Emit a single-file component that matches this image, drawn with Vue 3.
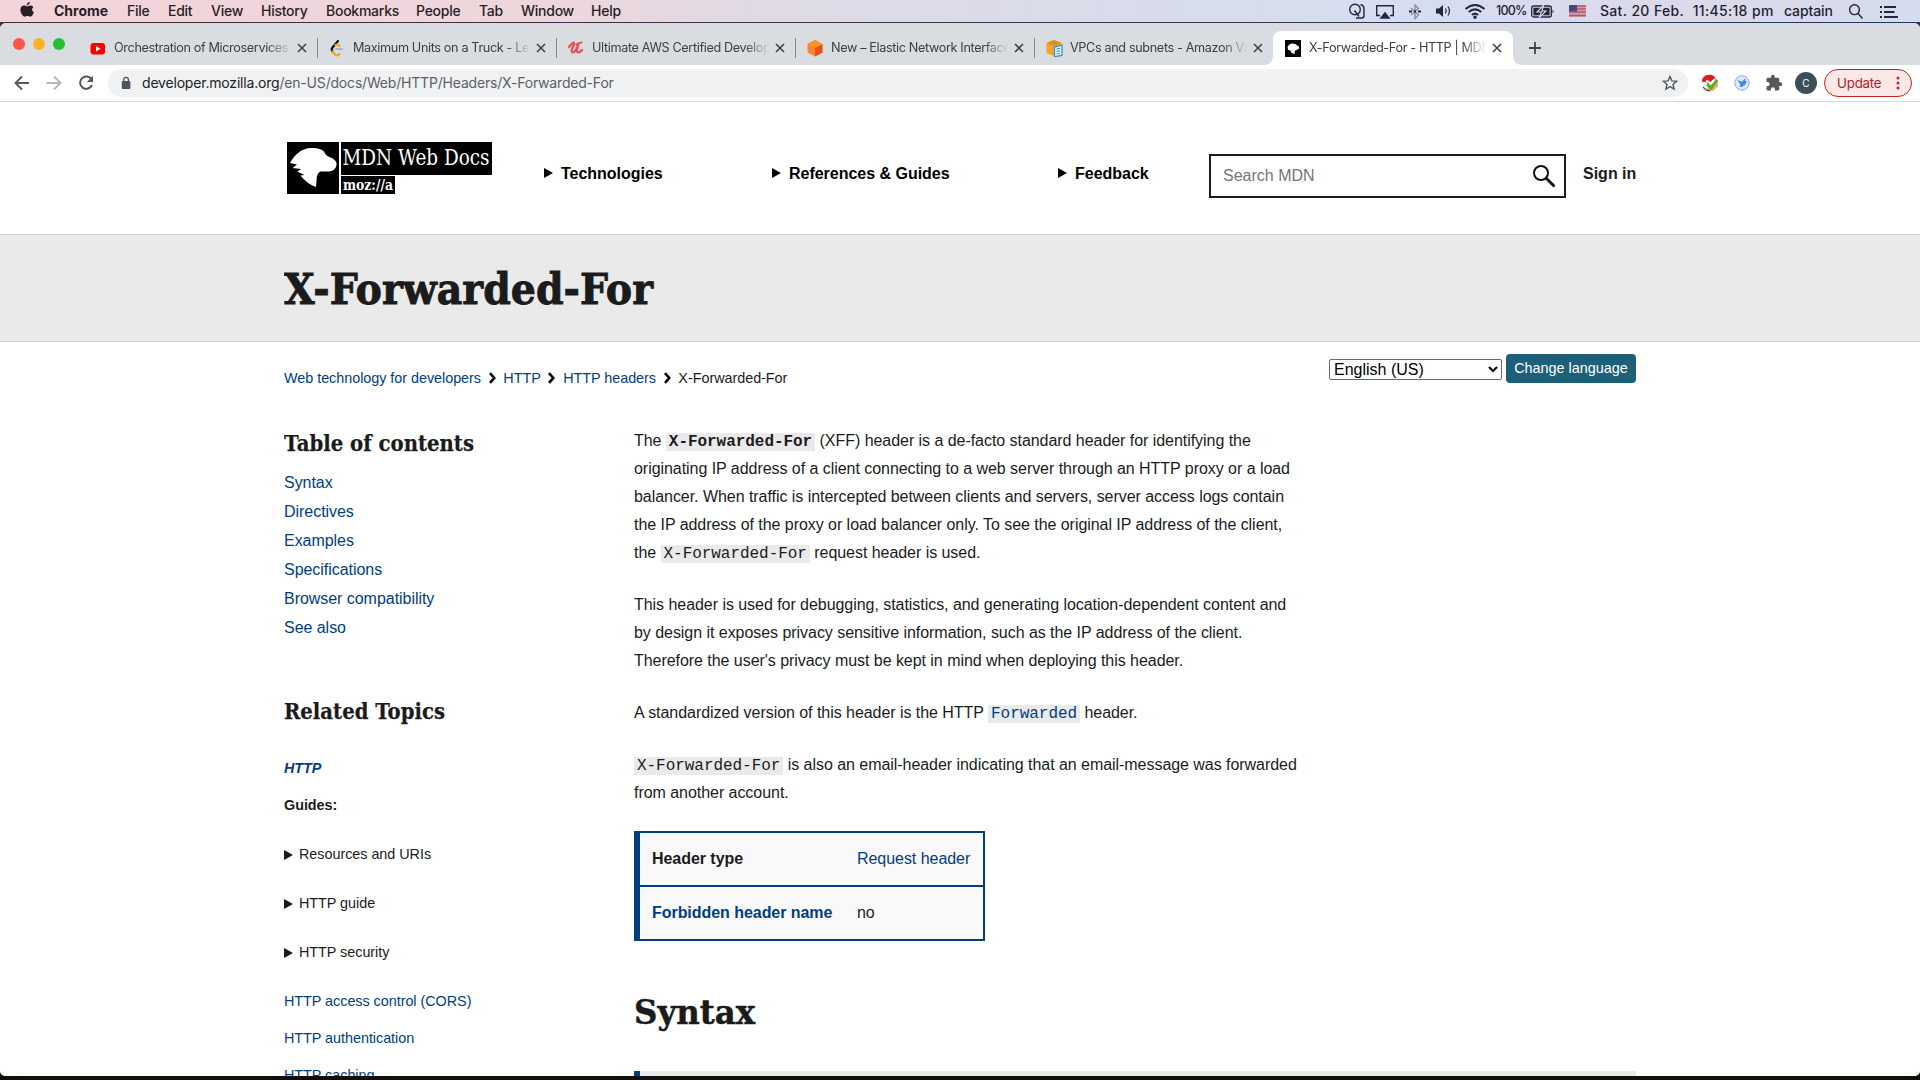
<script setup>
const menus = [
  { label: 'File', w: 41 },
  { label: 'Edit', w: 43 },
  { label: 'View', w: 50 },
  { label: 'History', w: 65 },
  { label: 'Bookmarks', w: 90 },
  { label: 'People', w: 63 },
  { label: 'Tab', w: 42 },
  { label: 'Window', w: 70 },
  { label: 'Help', w: 40 },
]
const tabs = [
  { title: 'Orchestration of Microservices', icon: 'youtube' },
  { title: 'Maximum Units on a Truck - Le', icon: 'leet' },
  { title: 'Ultimate AWS Certified Develop', icon: 'udemy' },
  { title: 'New – Elastic Network Interface', icon: 'aws' },
  { title: 'VPCs and subnets - Amazon VP', icon: 'docs' },
  { title: 'X-Forwarded-For - HTTP | MDN', icon: 'mdn', active: true },
]
const crumbs = ['Web technology for developers', 'HTTP', 'HTTP headers']
const toc = ['Syntax', 'Directives', 'Examples', 'Specifications', 'Browser compatibility', 'See also']
const groups = ['Resources and URIs', 'HTTP guide', 'HTTP security']
const links = ['HTTP access control (CORS)', 'HTTP authentication', 'HTTP caching']
</script>

<template>
  <div class="screen">
    <div class="menubar">
      <svg class="apple" width="16" height="18" viewBox="0 0 16 18"><path fill="#2b1d24" d="M10.9 1c.1 1.700-1.500 3.500-3.200 3.400C7.500 2.800 9.200 1.100 10.900 1zM14.400 6.200c-1.800 1.100-1.700 4 .5 5-.7 2-2.100 4.500-3.600 4.500-1.100 0-1.500-.7-2.800-.7s-1.800.7-2.800.7C4 15.700 1.400 12 1.400 8.800 1.400 6 3.200 4.500 5 4.500c1.300 0 2.200.8 3.200.8.900 0 1.900-.9 3.500-.9 1.100 0 2.100.6 2.700 1.800z" /></svg>
      <span class="app-name">Chrome</span>
      <span v-for="m in menus" :key="m.label" class="menu" :style="{ width: m.w + 'px' }">{{ m.label }}</span>
      <div class="status">
        <svg width="18" height="18" viewBox="0 0 18 18" fill="none" stroke="#26263a" stroke-width="1.400"><circle cx="7" cy="7.500" r="5.300" /><path d="M6.500 8.500l4.500 6M12.500 2.500q3.500 1 3.500 4v7q0 2.500-2.500 2.500H8" /></svg>
        <svg class="airplay" width="20" height="18" viewBox="0 0 20 18"><path d="M5 13.500H1.700V3.700h16.600v9.800H15" fill="none" stroke="#26263a" stroke-width="1.400" /><path d="M10 9.800l5.500 6.900h-11z" fill="#26263a" /></svg>
        <svg class="bt" width="12" height="18" viewBox="0 0 12 18" fill="none" stroke="#85849a" stroke-width="1.200"><path d="M2 6.300l7.500 6.500L6 16.500V3l3.500 3.500L2 13" /><path d="M0 9.500h3M5 9.500h2M9 9.500h3" stroke="#26263a" stroke-width="2" /></svg>
        <svg class="vol" width="18" height="18" viewBox="0 0 18 18"><path d="M1 6.500h3L8 3v12l-4-3.500H1z" fill="#26263a" /><path d="M10.500 6.500q1.500 2.500 0 5M13 4.500q2.900 4.500 0 9" fill="none" stroke="#26263a" stroke-width="1.200" /></svg>
        <svg class="wifi" width="22" height="18" viewBox="0 0 22 18" fill="none" stroke="#26263a" stroke-width="2"><path d="M1.500 7q9.500-8 19 0M4.700 10q6.300-5.300 12.600 0M7.900 13q3.100-2.700 6.200 0" /><circle cx="11" cy="15.300" r=".8" fill="#26263a" /></svg>
        <span class="pct">100%</span>
        <svg class="batt" width="24" height="18" viewBox="0 0 24 18"><rect x=".7" y="4" width="19.600" height="11" rx="2" fill="none" stroke="#26263a" stroke-width="1.300" /><rect x="2.400" y="5.700" width="16.200" height="7.600" fill="#26263a" /><path d="M21.500 7.500q2 2 0 4z" fill="#26263a" /><path d="M12.500 3.500L6 10h4.500L8 15.800 15 9h-4z" fill="#26263a" stroke="#dcdbea" stroke-width="1.100" /></svg>
        <svg class="flag" width="17" height="12" viewBox="0 0 17 12"><rect width="17" height="12" fill="#c9a0ae" /><path d="M0 1h17M0 4h17M0 7h17M0 10.500h17" stroke="#b95468" stroke-width="1.500" /><rect width="8" height="6.500" fill="#48487e" /></svg>
        <span class="clock">Sat. 20 Feb.&nbsp; 11:45:18 pm</span>
        <span class="user">captain</span>
        <svg class="spot" width="16" height="18" viewBox="0 0 16 18" fill="none" stroke="#26263a" stroke-width="1.400"><circle cx="6.500" cy="7.700" r="4.900" /><path d="M10 11.500l4.500 5" /></svg>
        <svg class="list" width="20" height="18" viewBox="0 0 20 18" stroke="#26263a" stroke-width="2"><path d="M1 5h2M1 10h2M1 15h2M5 5h12M5 10h10.500M5 15h14" /></svg>
      </div>
    </div>

    <div class="window">
      <div class="tabstrip">
        <div class="lights"><i class="red" /><i class="yellow" /><i class="green" /></div>
        <div v-for="t in tabs" :key="t.icon" class="tab" :class="[{ active: t.active }, t.icon]">
          <svg class="fav" width="18" height="18" viewBox="0 0 18 18">
            <template v-if="t.icon === 'youtube'"><rect x="1.500" y="4" width="14.500" height="11.500" rx="3" fill="#f00" /><path d="M7 7v5.500l4.500-2.700z" fill="#fff" /></template>
            <template v-else-if="t.icon === 'leet'"><path d="M10 2L4.500 8.500q-1.500 2 0 4" fill="none" stroke="#111" stroke-width="2.200" stroke-linecap="round" /><path d="M7.500 6q2-1 4 1M4.500 12.500l2.500 3q2 2 4.500-.5" fill="none" stroke="#f6a21d" stroke-width="2.200" stroke-linecap="round" /><path d="M8 10h6" stroke="#b5b5b5" stroke-width="2" stroke-linecap="round" /></template>
            <template v-else-if="t.icon === 'udemy'"><path d="M2 8q3-4 4.500-4.500Q8 4 5.500 8.500q-2 5 .5 5 2.500-.5 5.500-8-3 7.500-.3 8 2 0 3.800-2.500M9.500 5.500q3-2 5-2" fill="none" stroke="#ea5252" stroke-width="2.200" stroke-linecap="round" /></template>
            <template v-else-if="t.icon === 'aws'"><path d="M9 1l7.500 4v8.500L9 17.500 1.500 13.500V5z" fill="#f58536" /><path d="M9 9l7.500-4v8.500L9 17.500z" fill="#e8501c" /><path d="M9 1l7.500 4L9 9 1.500 5z" fill="#fd9428" /></template>
            <template v-else-if="t.icon === 'docs'"><path d="M9 1l7.500 3v9.500L9 17 1.500 14V4z" fill="#f0a52b" /><path d="M9 1l7.500 3L9 6.500 1.500 4z" fill="#d6921f" /><path d="M9.500 8L17 6v10.500l-7.500 1.200z" fill="#eaf5fc" stroke="#3d91c8" stroke-width="1.300" /><path d="M11.500 10l3.500-.7M11.500 12.500l3.500-.6M11.500 15l3.500-.5" stroke="#3d91c8" stroke-width="1.200" /></template>
            <template v-else><rect x="1" y="1" width="16" height="17" /><path d="M3.500 8q1.500-3.500 5-3.500 3.500 0 4 1.500l2.500 1.500q.5 3-2.500 3.500l-1.500.5-.5 3.500q-3.500-.5-4-3.500-1.500 0-2.500-1z" fill="#fff" /></template>
          </svg>
          <span class="tab-title">{{ t.title }}</span>
          <svg class="close" width="10" height="10" viewBox="0 0 10 10"><path d="M1 1l8 8M9 1L1 9" stroke="#3f4246" stroke-width="1.600" /></svg>
        </div>
        <svg class="plus" width="14" height="14" viewBox="0 0 14 14"><path d="M7 1v12M1 7h12" stroke="#3f4246" stroke-width="1.800" /></svg>
      </div>

      <div class="toolbar">
        <svg class="nav-ico" width="18" height="18" viewBox="0 0 18 18" fill="none" stroke="#55585c" stroke-width="1.900"><path d="M16 9H3M9 2.500L2.500 9 9 15.500" /></svg>
        <svg class="nav-ico fwd" width="18" height="18" viewBox="0 0 18 18" fill="none" stroke="#b4b6b9" stroke-width="1.900"><path d="M1.500 9H15M9 2.500L15.500 9 9 15.500" /></svg>
        <svg class="nav-ico rel" width="18" height="18" viewBox="0 0 18 18"><path d="M14.300 5A6.200 6.200 0 1 0 15 11" fill="none" stroke="#55585c" stroke-width="2" /><path d="M16 1.800V8H9.800z" fill="#55585c" /></svg>
        <div class="omnibox">
          <svg width="10" height="14" viewBox="0 0 10 14"><rect x=".8" y="5" width="8.600" height="8" rx="1" fill="#505357" /><path d="M2.800 5.500V3.600q0-2.300 2.300-2.300t2.300 2.300v1.900" fill="none" stroke="#505357" stroke-width="1.300" /></svg>
          <span class="url"><b>developer.mozilla.org</b>/en-US/docs/Web/HTTP/Headers/X-Forwarded-For</span>
          <svg class="star" width="18" height="18" viewBox="0 0 18 18"><path d="M9 2.500l1.900 4.400 4.700.4-3.600 3.100 1.100 4.700L9 12.600l-4.100 2.500L6 10.400 2.400 7.300l4.700-.4z" fill="none" stroke="#55585c" stroke-width="1.400" /></svg>
        </div>
        <svg class="ext" width="20" height="20" viewBox="0 0 20 20"><circle cx="11.500" cy="11" r="6" fill="#e9dfb4" /><path d="M2 9Q2 2 9 1.800q6-.3 7 5.200-5 0-7 4-3-3-7-2z" fill="#d81f28" /><circle cx="3.200" cy="11" r="1.600" fill="#fff" /><path d="M6 8q3 0 4 3l5-5" fill="none" stroke="#fff" stroke-width="1.800" /><path d="M10 14L17.500 6l.5 7-5 5q-5 0-7-3z" fill="#e3b052" /><path d="M7.500 11l3.500 4 6-8" fill="none" stroke="#46ad3f" stroke-width="2.800" /><path d="M3 14l3 3 4 1" stroke="#6b4a42" stroke-width="1.300" fill="none" /></svg>
        <svg class="ext e2" width="20" height="20" viewBox="0 0 20 20"><circle cx="10" cy="10" r="7.200" fill="#dcecff" stroke="#8fa6fb" stroke-width="1" /><path d="M5.500 7l4.500 1.800L13.500 5l-.5 3h2l-2 4-3.500 2H7.500l1-2z" fill="#4b82f0" /></svg>
        <svg class="ext e3" width="18" height="18" viewBox="0 0 24 24"><path fill="#55585c" d="M20.500 11H19V7c0-1.100-.9-2-2-2h-4V3.500a2.500 2.500 0 0 0-5 0V5H4c-1.100 0-2 .9-2 2v3.800h1.500a2.700 2.700 0 0 1 0 5.400H2V20c0 1.100.9 2 2 2h3.800v-1.500a2.700 2.700 0 0 1 5.400 0V22H17c1.100 0 2-.9 2-2v-4h1.500a2.500 2.500 0 0 0 0-5z" /></svg>
        <span class="avatar">C</span>
        <div class="update"><span>Update</span><svg width="4" height="14" viewBox="0 0 4 14" fill="#c5221f"><circle cx="2" cy="2" r="1.500" /><circle cx="2" cy="7" r="1.500" /><circle cx="2" cy="12" r="1.500" /></svg></div>
      </div>

      <div class="page">
        <header>
          <svg class="logo" width="206" height="52" viewBox="0 0 206 52">
            <rect width="52" height="52" /><rect x="54" width="151" height="33" /><rect x="54" y="34" width="54" height="18" />
            <path fill="#fff" d="M3 21Q11 6.500 24 6q9-.5 13 3.500 2 4.500 5.500 5.500 4 1 6.500 4.500 1.500 3 0 5.500-2 4-7 4.500l-8.500 0q-3 1-3.700 6L29 45q-9-3-15.500-11.500l4-.5-7-3.500 3.500-2.500-8.500-1 4.500-3.500z" />
            <text x="55.500" y="23" textLength="147" lengthAdjust="spacingAndGlyphs" class="logo-a">MDN Web Docs</text>
            <text x="56" y="48" textLength="50" lengthAdjust="spacingAndGlyphs" class="logo-b">moz://a</text>
          </svg>
          <nav>
            <span class="n1"><i class="tri" />Technologies</span>
            <span class="n2"><i class="tri" />References &amp; Guides</span>
            <span class="n3"><i class="tri" />Feedback</span>
          </nav>
          <div class="search">
            <span>Search MDN</span>
            <svg width="24" height="24" viewBox="0 0 24 24" fill="none" stroke="#111"><circle cx="9" cy="9" r="7" stroke-width="2" /><path d="M14 14l8.500 8.500" stroke-width="2.800" /></svg>
          </div>
          <span class="signin">Sign in</span>
        </header>

        <div class="band">
          <svg width="380" height="60" viewBox="0 0 380 60"><text x="0" y="45" textLength="369" lengthAdjust="spacingAndGlyphs" class="slab h1">X-Forwarded-For</text></svg>
        </div>

        <div class="crumbrow">
          <div class="crumbs">
            <template v-for="c in crumbs" :key="c">
              <a>{{ c }}</a>
              <svg width="7" height="12" viewBox="0 0 7 12"><path d="M1 1.200L5.300 6 1 10.800" fill="none" stroke="#000" stroke-width="2.600" /></svg>
            </template>
            <span>X-Forwarded-For</span>
          </div>
          <div class="lang">
            <div class="select"><span>English (US)</span><svg width="10" height="7" viewBox="0 0 10 7"><path d="M1 1l4 4 4-4" fill="none" stroke="#000" stroke-width="2" /></svg></div>
            <div class="change">Change language</div>
          </div>
        </div>

        <div class="columns">
          <aside>
            <svg class="side-h" width="200" height="30" viewBox="0 0 200 30"><text x="0" y="22" textLength="190" lengthAdjust="spacingAndGlyphs" class="slab h3">Table of contents</text></svg>
            <ul class="toc"><li v-for="i in toc" :key="i"><a>{{ i }}</a></li></ul>
            <svg class="side-h rel-h" width="200" height="30" viewBox="0 0 200 30"><text x="0" y="22" textLength="161" lengthAdjust="spacingAndGlyphs" class="slab h3">Related Topics</text></svg>
            <div class="related">
              <a class="http">HTTP</a>
              <strong>Guides:</strong>
              <span v-for="g in groups" :key="g" class="group"><i class="tri" />{{ g }}</span>
              <a v-for="l in links" :key="l">{{ l }}</a>
            </div>
          </aside>
          <main>
            <p>The <code><b>X-Forwarded-For</b></code> (XFF) header is a de-facto standard header for identifying the<br>originating IP address of a client connecting to a web server through an HTTP proxy or a load<br>balancer. When traffic is intercepted between clients and servers, server access logs contain<br>the IP address of the proxy or load balancer only. To see the original IP address of the client,<br>the <code>X-Forwarded-For</code> request header is used.</p>
            <p>This header is used for debugging, statistics, and generating location-dependent content and<br>by design it exposes privacy sensitive information, such as the IP address of the client.<br>Therefore the user's privacy must be kept in mind when deploying this header.</p>
            <p>A standardized version of this header is the HTTP <a><code>Forwarded</code></a> header.</p>
            <p><code>X-Forwarded-For</code> is also an email-header indicating that an email-message was forwarded<br>from another account.</p>
            <div class="props">
              <div class="row"><b>Header type</b><a>Request header</a></div>
              <div class="row"><b><a>Forbidden header name</a></b><span>no</span></div>
            </div>
            <svg class="syn" width="200" height="50" viewBox="0 0 200 50"><text x="0" y="35" textLength="121" lengthAdjust="spacingAndGlyphs" class="slab h2">Syntax</text></svg>
            <div class="codebox" />
          </main>
        </div>
      </div>
    </div>
  </div>
</template>

<style>
body { margin: 0; }
</style>

<style scoped>
.screen { width: 1920px; height: 1080px; overflow: hidden; background: linear-gradient(90deg, #4b2a3a, #37364e 50%, #243559) top / 100% 40px no-repeat #150d0c; display: flex; flex-direction: column; }
svg { flex: none; display: block; }
.menubar { height: 22px; flex: none; margin-bottom: 1px; display: flex; align-items: center; background: linear-gradient(90deg, #f2d4da 0, #ecd7dd 30%, #dfdae6 40%, #d8dcea 60%, #d5def0 75%, #dcd9ea 87%, #d5dced 100%); font: 500 14px/22px Inter, sans-serif; letter-spacing: -.25px; color: #291d27; white-space: nowrap; }
.menubar span { font-weight: 450; }
.apple { margin-left: 19px; margin-top: -2px; }
.menubar .app-name { margin-left: 19px; width: 73px; font-weight: 700; letter-spacing: 0; }
.menu { flex: none; }
.status { margin-left: auto; display: flex; align-items: center; width: 572px; color: #1f1f30; }
.airplay { margin-left: 9px; }
.bt { margin-left: 14px; }
.vol { margin-left: 14px; }
.wifi { margin-left: 11px; }
.pct { margin-left: 10px; width: 35px; font-size: 12.500px; letter-spacing: -.75px; }
.flag { margin-left: 14px; }
.clock { margin-left: 14px; width: 184px; letter-spacing: .3px; word-spacing: .3px; }
.menubar .user { width: 64px; font-weight: 550; letter-spacing: -.1px; }
.list { margin-left: 15px; }

.window { height: 1053px; flex: none; border-radius: 6px 6px 5px 5px; overflow: hidden; background: #fff; display: flex; flex-direction: column; }
.tabstrip { height: 42px; flex: none; background: #d9dce1; display: flex; align-items: center; font: 12.700px/20px Inter, sans-serif; color: #3b3e43; }
.lights { display: flex; gap: 8px; padding: 0 13px; width: 52px; flex: none; }
.lights i { width: 12px; height: 12px; border-radius: 50%; flex: none; }
.red { background: #fc544d; }
.yellow { background: #fdb225; }
.green { background: #24c138; }
.tab { position: relative; width: 239px; height: 34px; margin-top: 8px; flex: none; display: flex; align-items: center; box-sizing: border-box; padding-left: 11px; }
.tab:not(.active):not(.docs)::after { content: ""; position: absolute; right: -1px; top: 7px; width: 1px; height: 20px; background: #84878c; }
.tab.active { background: #fff; border-radius: 8px 8px 0 0; width: 240px; }
.tab.active::before, .tab.active::after { content: ""; position: absolute; bottom: 0; width: 8px; height: 8px; }
.tab.active::before { left: -8px; background: radial-gradient(circle at 0 0, #d9dce1 7.500px, #fff 8px); }
.tab.active::after { right: -8px; background: radial-gradient(circle at 100% 0, #d9dce1 7.500px, #fff 8px); }
.tab-title { margin-left: 7px; width: 176px; overflow: hidden; white-space: nowrap; letter-spacing: -.38px; mask-image: linear-gradient(90deg, #000 87%, transparent 101%); }
.close { margin-left: 7px; }
.plus { margin: 8px 0 0 15px; }

.toolbar { height: 36px; flex: none; border-bottom: 1px solid #d5d7da; display: flex; align-items: center; }
.nav-ico { margin-left: 13px; }
.fwd { margin-left: 14px; }
.rel { margin-left: 14px; }
.omnibox { margin-left: 13px; width: 1580px; height: 28px; flex: none; border-radius: 14px; background: #eff1f3; box-sizing: border-box; padding: 0 9px 0 13px; display: flex; align-items: center; }
.url { margin-left: 11px; font: 14px/20px Inter, sans-serif; letter-spacing: -.19px; color: #5c5f64; white-space: nowrap; }
.url b { font-weight: 400; color: #202124; }
.star { margin-left: auto; }
.ext { margin-left: 12px; }
.e2 { margin-left: 12px; }
.e3 { margin-left: 13px; }
.avatar { margin-left: 12px; width: 22px; height: 22px; border-radius: 50%; background: #3b4f58; color: #fff; font: 10px/22px Inter, sans-serif; text-align: center; flex: none; }
.update { margin-left: 7px; width: 88px; height: 28px; flex: none; box-sizing: border-box; border: 1px solid #c5221f; border-radius: 14px; background: #fbe9e8; color: #b8201d; font: 13.300px/20px Inter, sans-serif; letter-spacing: -.2px; display: flex; align-items: center; justify-content: space-between; padding: 0 11px 0 12px; }

.page { font: 16px/28px "Liberation Sans", Arial, sans-serif; color: #1b1b1b; }
a { color: #003d84; }
.tri { display: block; width: 0; height: 0; border: 5.500px solid transparent; border-left: 9px solid currentColor; border-right: 0; margin: 0 7px 2px 0; }
header { height: 132px; border-bottom: 1px solid #c6d1d3; padding: 0 284px 0 287px; display: flex; align-items: flex-start; box-sizing: content-box; }
.logo { margin-top: 40px; }
.logo-a { font: 22px "DejaVu Serif", serif; fill: #fff; }
.logo-b { font: bold 14px "DejaVu Serif", serif; fill: #fff; }
nav { display: flex; margin-top: 58px; font-weight: 700; color: #000; line-height: 28px; margin-left: 51px; height: 28px; letter-spacing: -.02px; }
nav span { display: flex; align-items: center; flex: none; }
nav .tri { margin-right: 8px; }
.n1 { width: 228px; }
.n2 { width: 286px; }
.n3 { width: 151px; }
.search { margin-top: 52px; width: 357px; height: 44px; flex: none; box-sizing: border-box; border: 2px solid #1b1b1b; display: flex; align-items: center; justify-content: space-between; padding: 0 8px 1px 12px; color: #757575; }
.signin { margin: 58px 0 0 17px; font-weight: 700; white-space: nowrap; }
.band { height: 107px; border-bottom: 1px solid #c6d1d0; background: #eaeaea; padding: 24px 0 0 284px; box-sizing: border-box; }
.slab { font-family: "DejaVu Serif", serif; font-weight: 700; fill: #1b1b1b; stroke: #1b1b1b; }
.h1 { font-size: 42px; stroke-width: .9px; }
.h2 { font-size: 33px; stroke-width: .5px; }
.h3 { font-size: 21.500px; stroke-width: .25px; }
.crumbrow { padding: 0 284px; display: flex; justify-content: space-between; align-items: flex-start; height: 84px; font-size: 14.400px; }
.crumbs { display: flex; align-items: center; gap: 7.700px; margin-top: 22px; white-space: nowrap; letter-spacing: -.04px; }
.lang { display: flex; align-items: flex-start; gap: 4px; margin-top: 12px; }
.select { margin-top: 5px; width: 173px; height: 21px; box-sizing: border-box; border: 1px solid #6b6b6b; border-radius: 2px; display: flex; align-items: center; justify-content: space-between; padding: 0 3px 0 4px; color: #000; font-size: 16px; line-height: 19px; }
.change { width: 130px; height: 29px; border-radius: 4px; background: #1e6079; color: #fff; text-align: center; line-height: 28px; }
.columns { display: flex; padding: 0 284px; }
aside { width: 350px; flex: none; letter-spacing: -.04px; }
.side-h { margin-top: 3px; letter-spacing: 0; }
.toc { list-style: none; margin: 9px 0 0; padding: 0; line-height: 29px; }
.rel-h { margin-top: 55px; height: 30px; }
.related { display: flex; flex-direction: column; font-size: 14.400px; line-height: 37px; margin-top: 23px; }
.http { font-weight: 700; font-style: italic; }
.group { display: flex; align-items: center; height: 49px; }
.group .tri { border-width: 5px 0 5px 9px; margin: 0 6px 0 0; }
.related strong { margin-bottom: 6px; }
.group + a { margin-top: 6px; }
main { flex: 1; padding-top: 1px; letter-spacing: -.046px; }
p { margin: 0 0 24px; white-space: nowrap; }
code { font: 16px/16px "Liberation Mono", "Courier New", monospace; background: #eaeaea; padding: 0 3px; }
.props { width: 351px; margin-top: 19px; box-sizing: border-box; border: 2px solid #003d84; border-left-width: 6px; background: #f9f9f9; }
.row { display: flex; height: 52px; line-height: 52px; padding-left: 12px; }
.row + .row { border-top: 2px solid #003d84; }
.row b { width: 205px; }
.syn { margin-top: 48px; letter-spacing: 0; }
.codebox { height: 20px; margin-top: 32px; border-left: 6px solid #003d84; background: #eaeaea; }
</style>
